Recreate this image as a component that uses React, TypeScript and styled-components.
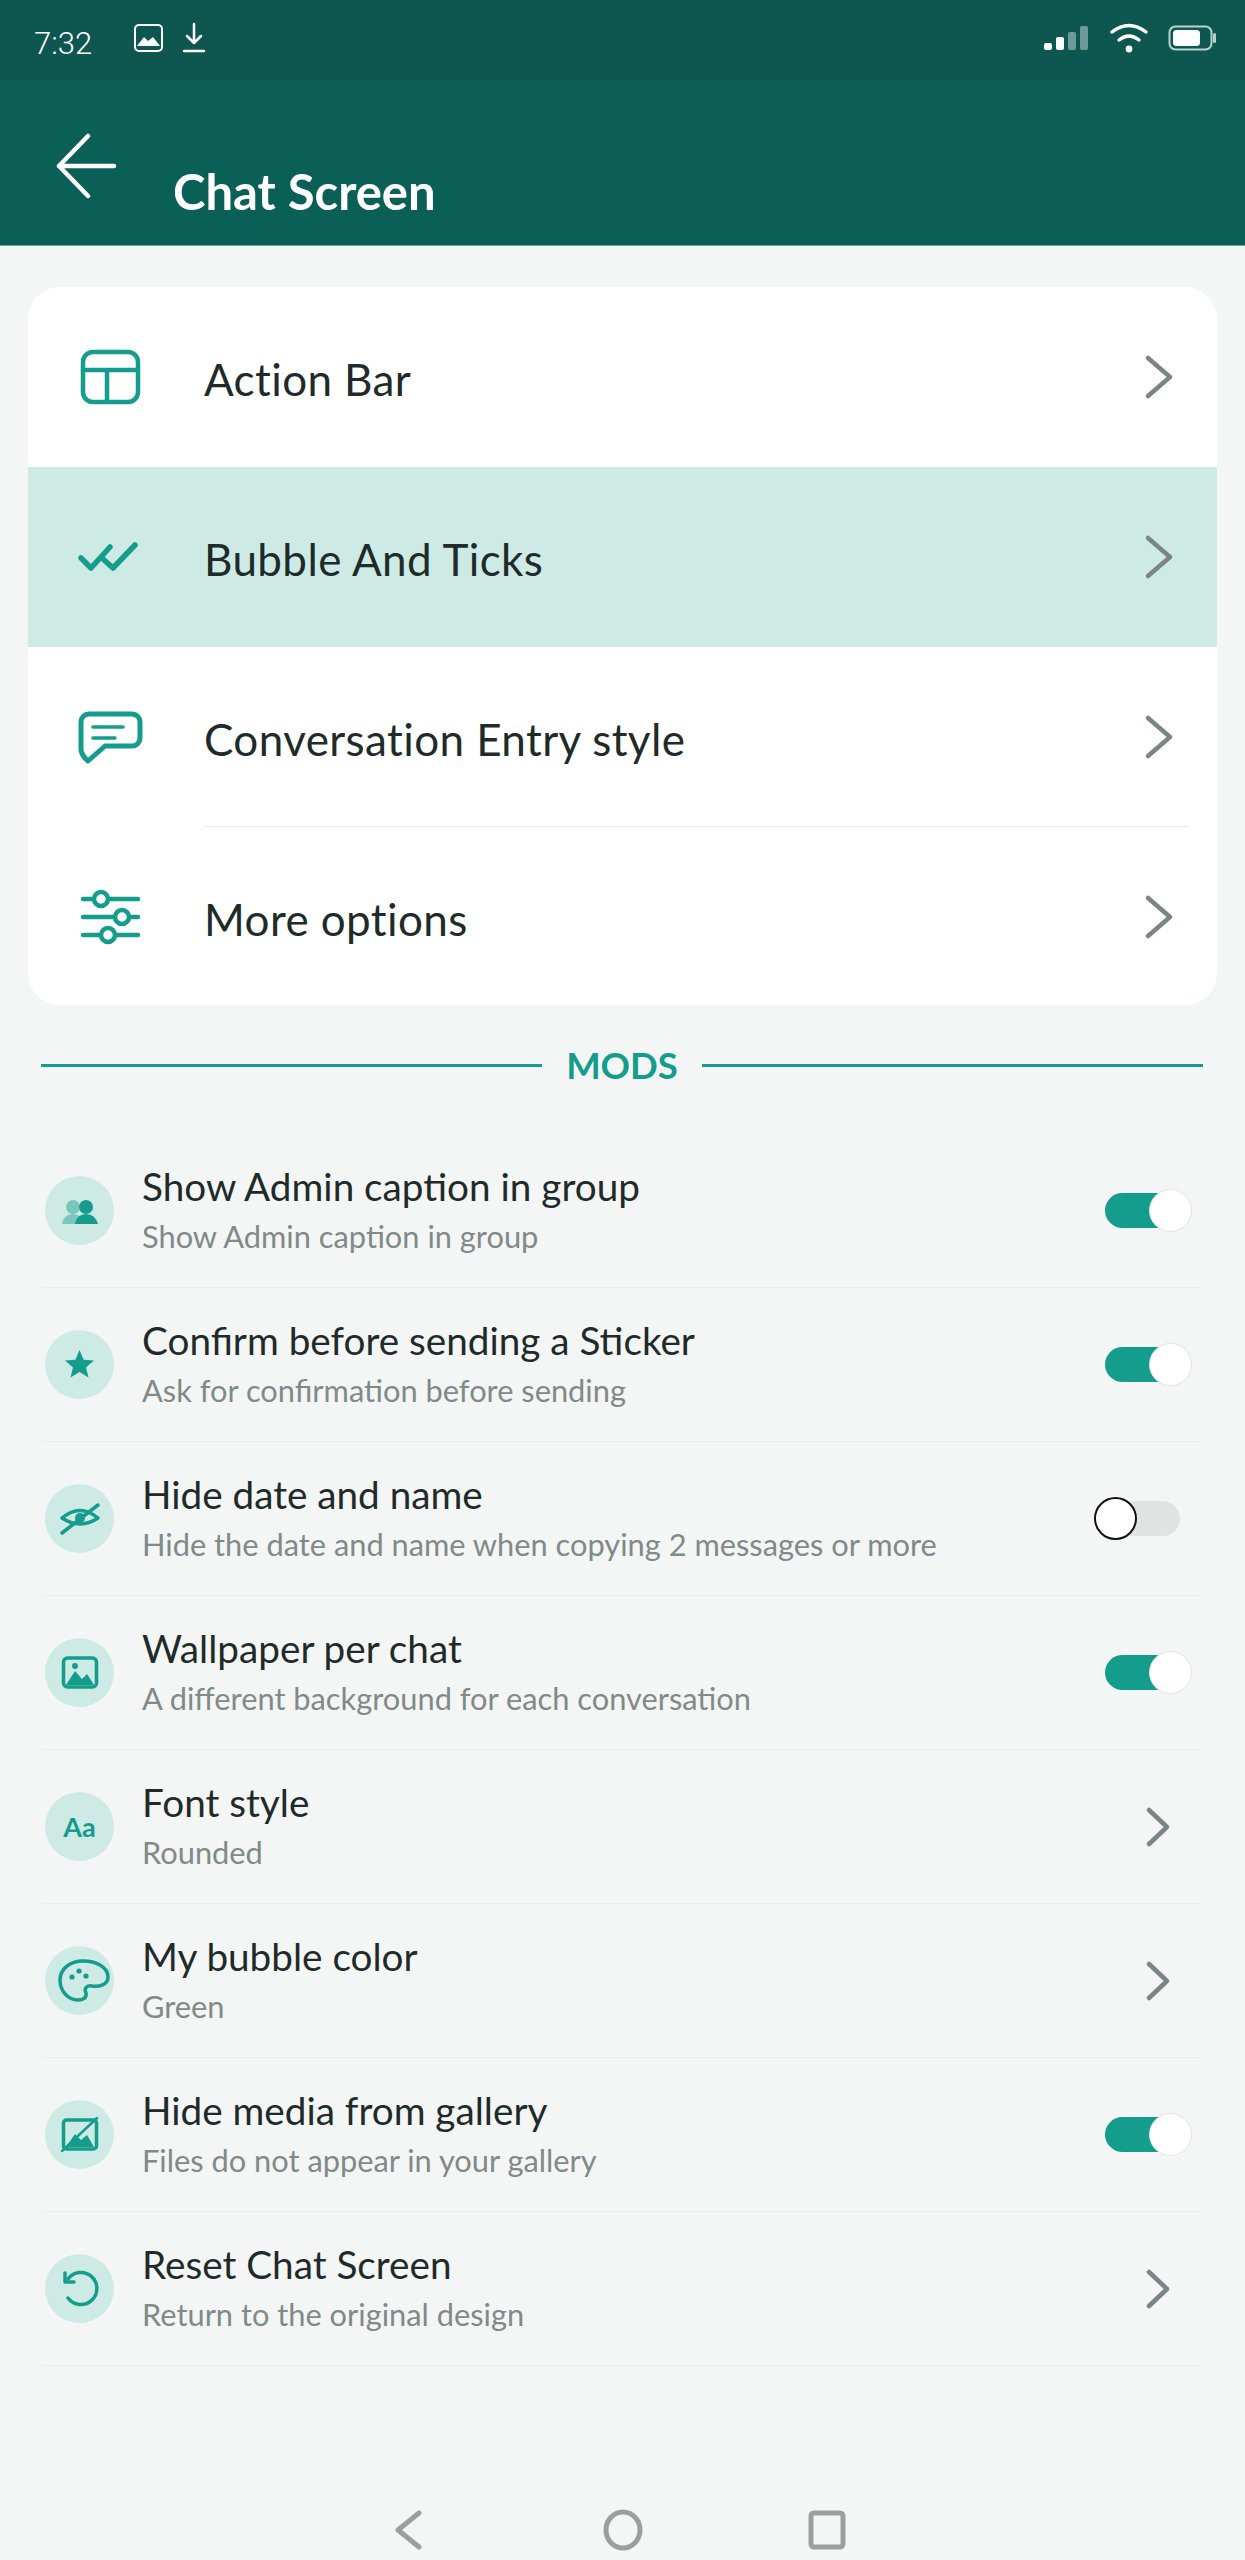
import React from "react";
import styled, { createGlobalStyle } from "styled-components";

const TEAL = "#149c8c";

interface ModItem {
  title: string;
  sub: string;
  icon: JSX.Element;
  toggle?: boolean;
}

const GlobalStyle = createGlobalStyle`
  html, body {
    margin: 0;
    padding: 0;
    background: #f4f6f5;
  }
  * {
    box-sizing: border-box;
  }
`;

const Page = styled.div`
  width: 1245px;
  height: 2560px;
  display: flex;
  flex-direction: column;
  background: #f4f6f5;
  font-family: Lato, "Liberation Sans", sans-serif;
  overflow: hidden;
`;

const StatusBar = styled.div`
  height: 80px;
  flex: none;
  display: flex;
  align-items: center;
  padding: 0 29px 0 34px;
  background: #0d5750;
  color: #fff;
`;

const Time = styled.span`
  font-family: Roboto, sans-serif;
  font-weight: 300;
  font-size: 31px;
  width: 99px;
  padding-top: 6px;
`;

const StatusLeft = styled.div`
  display: flex;
  align-items: center;
  gap: 18px;
  flex: 1;
  margin-bottom: 4px;
`;

const StatusRight = styled.div`
  display: flex;
  align-items: center;
  gap: 20px;
  margin-bottom: 4px;
`;

const AppBar = styled.div`
  height: 166px;
  flex: none;
  display: flex;
  background: #0a5f56;
  border-bottom: 1px solid #6fa59e;
  padding: 53px 0 0 54px;
`;

const Title = styled.h1`
  margin: 26px 0 0 56px;
  font-size: 49px;
  line-height: 64px;
  font-weight: 700;
  color: #fff;
`;

const Card = styled.div`
  margin: 41px 28px 0;
  height: 718px;
  background: #fff;
  border-radius: 32px;
  overflow: hidden;
  flex: none;
`;

const MenuRow = styled.div<{ $active?: boolean }>`
  height: 180px;
  display: flex;
  align-items: center;
  padding: 0 43px 0 47px;
  background: ${p => (p.$active ? "#cdeae5" : "transparent")};
`;

const MenuIcon = styled.svg`
  width: 70px;
  height: 70px;
  flex: none;
  margin-right: 59px;
  fill: none;
  stroke: ${TEAL};
  stroke-width: 4.5;
  stroke-linecap: round;
  stroke-linejoin: round;
`;

const MenuLabel = styled.span`
  flex: 1;
  font-size: 44px;
  letter-spacing: 0.4px;
  padding-top: 3px;
  color: #1f2b2a;
`;

const MenuDivider = styled.div`
  height: 1px;
  margin: -1px 27px 0 176px;
  background: #e6e9e8;
`;

const SectionHead = styled.div`
  margin: 40px 42px 0 41px;
  height: 40px;
  display: flex;
  align-items: center;
  gap: 24px;
  flex: none;
  font-size: 36.5px;
  font-weight: 700;
  color: ${TEAL};

  &::before,
  &::after {
    content: "";
    flex: 1;
    height: 3px;
    background: ${TEAL};
  }
`;

const ModList = styled.div`
  margin: 49px 42px 0 41px;
  flex: none;
`;

const ModRow = styled.div`
  height: 154px;
  display: flex;
  align-items: center;
  padding: 0 23px 0 4px;
  border-bottom: 1px solid #ebeeed;
`;

const IconCircle = styled.div`
  width: 69px;
  height: 69px;
  flex: none;
  border-radius: 50%;
  background: #cdeae5;
  margin-right: 28px;
  display: flex;
  align-items: center;
  justify-content: center;
  color: ${TEAL};
  font-size: 27px;
  font-weight: 700;
`;

const ModIcon = styled.svg`
  width: 69px;
  height: 69px;
  fill: none;
  stroke: ${TEAL};
  stroke-width: 3.5;
  stroke-linecap: round;
  stroke-linejoin: round;
`;

const ModText = styled.div`
  flex: 1;
  min-width: 0;
  padding-bottom: 3px;
`;

const ModTitle = styled.div`
  font-size: 38.7px;
  line-height: 50px;
  color: #1f2b2a;
`;

const ModSub = styled.div`
  font-size: 30.8px;
  line-height: 42px;
  margin-top: 5px;
  color: #808a88;
`;

const Track = styled.div<{ $on: boolean }>`
  position: relative;
  width: 75px;
  height: 35px;
  flex: none;
  border-radius: 18px;
  background: ${p => (p.$on ? TEAL : "#e1e3e3")};
`;

const Thumb = styled.div<{ $on: boolean }>`
  position: absolute;
  top: -4px;
  width: 43px;
  height: 43px;
  border-radius: 50%;
  background: #fff;
  border: ${p => (p.$on ? "1px solid #e2e4e4" : "2px solid #111")};
  left: ${p => (p.$on ? "44px" : "-11px")};
`;

const Chevron = styled.svg`
  flex: none;
  fill: none;
  stroke: #7b8583;
  stroke-width: 4.5;
  stroke-linecap: round;
  stroke-linejoin: round;
`;

const ListChevron = styled(Chevron)`
  margin-right: 9px;
`;

const NavBar = styled.div`
  margin-top: auto;
  padding: 0 6px 9px 0;
  display: flex;
  justify-content: center;
  align-items: center;
  gap: 165px;
`;

const NavBack = styled.svg`
  margin-right: 16px;
  fill: none;
  stroke: #9aa09e;
  stroke-width: 5;
  stroke-linecap: round;
  stroke-linejoin: round;
`;

const NavIcon = styled.svg`
  fill: none;
  stroke: #9aa09e;
  stroke-width: 5;
`;

const Toggle = ({ on }: { on: boolean }) => (
  <Track $on={on}>
    <Thumb $on={on} />
  </Track>
);

const menu = [
  {
    label: "Action Bar",
    icon: (
      <>
        <rect x="8" y="10" width="55" height="50" rx="10" />
        <path d="M8 28H63M32 28V60" />
      </>
    )
  },
  {
    label: "Bubble And Ticks",
    active: true,
    icon: <path d="M6 36L16 46L35 25M28 37L38 46L60 23" strokeWidth="5.5" />
  },
  {
    label: "Conversation Entry style",
    icon: (
      <>
        <path d="M14 12H57a8 8 0 0 1 8 8V36a8 8 0 0 1-8 8H30L13 59Q7 54 6 48V20a8 8 0 0 1 8-8Z" strokeWidth="5" />
        <path d="M18 25H48M18 36H40" strokeWidth="3.5" />
      </>
    )
  },
  {
    label: "More options",
    icon: (
      <>
        <path d="M8 17H63M8 35H63M8 53H63" strokeWidth="4.5" />
        <circle cx="26" cy="17" r="7" fill="#fff" strokeWidth="4.5" />
        <circle cx="47" cy="35" r="7" fill="#fff" strokeWidth="4.5" />
        <circle cx="33" cy="53" r="7" fill="#fff" strokeWidth="4.5" />
      </>
    )
  }
];

const mods: ModItem[] = [
  {
    title: "Show Admin caption in group",
    sub: "Show Admin caption in group",
    toggle: true,
    icon: (
      <ModIcon viewBox="0 0 69 69">
        <g fill={TEAL} stroke="none" opacity="0.45">
          <circle cx="28" cy="31" r="7" />
          <path d="M17 48Q19 38 28 38Q37 38 40 48Z" />
        </g>
        <g fill={TEAL} stroke="none">
          <circle cx="41" cy="31" r="7" />
          <path d="M30 48Q32 38 41 38Q50 38 53 48Z" />
        </g>
      </ModIcon>
    )
  },
  {
    title: "Confirm before sending a Sticker",
    sub: "Ask for confirmation before sending",
    toggle: true,
    icon: (
      <ModIcon viewBox="0 0 69 69">
        <path
          fill={TEAL}
          stroke="none"
          d="M34.5 20L38.6 29.8L49 30.6L41 37.4L43.5 47.6L34.5 42L25.5 47.6L28 37.4L20 30.6L30.4 29.8Z"
        />
      </ModIcon>
    )
  },
  {
    title: "Hide date and name",
    sub: "Hide the date and name when copying 2 messages or more",
    toggle: false,
    icon: (
      <ModIcon viewBox="0 0 69 69">
        <path d="M17 34Q35 19 53 34Q35 46 17 34Z" />
        <circle cx="35" cy="34" r="5" fill={TEAL} stroke="none" />
        <path d="M17 49L53 21" />
      </ModIcon>
    )
  },
  {
    title: "Wallpaper per chat",
    sub: "A different background for each conversation",
    toggle: true,
    icon: (
      <ModIcon viewBox="0 0 69 69">
        <rect x="18.5" y="20" width="33" height="29" rx="4" />
        <circle cx="30" cy="28" r="3" fill={TEAL} stroke="none" />
        <path d="M21 47L30 33L37 41L42 36L49 47Z" fill={TEAL} stroke="none" />
      </ModIcon>
    )
  },
  {
    title: "Font style",
    sub: "Rounded",
    icon: <span>Aa</span>
  },
  {
    title: "My bubble color",
    sub: "Green",
    icon: (
      <ModIcon viewBox="0 0 69 69">
        <path d="M38 15C51 15 63 21 63 31C63 39 54 41 47 40C41 39 39 43 41 47C42 52 38 54 33 54C23 54 15 45 15 34C15 23 25 15 38 15Z" />
        <circle cx="27" cy="31" r="2.6" fill={TEAL} stroke="none" />
        <circle cx="34" cy="25" r="2.6" fill={TEAL} stroke="none" />
        <circle cx="41" cy="30" r="2.6" fill={TEAL} stroke="none" />
      </ModIcon>
    )
  },
  {
    title: "Hide media from gallery",
    sub: "Files do not appear in your gallery",
    toggle: true,
    icon: (
      <ModIcon viewBox="0 0 69 69">
        <rect x="18.5" y="20" width="33" height="29" rx="3" />
        <path d="M21 47L30 34L36 40L42 35L49 47Z" fill={TEAL} stroke="none" />
        <path d="M17 51L52 18" strokeWidth="2.5" />
      </ModIcon>
    )
  },
  {
    title: "Reset Chat Screen",
    sub: "Return to the original design",
    icon: (
      <ModIcon viewBox="0 0 69 69">
        <path d="M23 25A16 16 0 1 1 23 44" />
        <path d="M20 19V28H29" />
      </ModIcon>
    )
  }
];

export default function App() {
  return (
    <Page>
      <GlobalStyle />
      <StatusBar>
        <Time>7:32</Time>
        <StatusLeft>
          <svg width="31" height="30" viewBox="0 0 31 30" fill="none">
            <rect x="2" y="2" width="27" height="26" rx="4" stroke="#fff" strokeWidth="2" />
            <path d="M4 23L11 14L15 18L20 14L27 23Z" fill="#fff" />
          </svg>
          <svg width="24" height="32" viewBox="0 0 24 32" fill="none" stroke="#fff" strokeWidth="2.5" strokeLinecap="round">
            <path d="M12 2V20M5 14L12 21L19 14" strokeLinejoin="round" />
            <path d="M2 29H22" />
          </svg>
        </StatusLeft>
        <StatusRight>
          <svg width="46" height="24" viewBox="0 0 46 24" fill="#fff">
            <rect x="0" y="17" width="8" height="7" rx="2" />
            <rect x="12" y="11" width="8" height="13" rx="2" />
            <rect x="24" y="6" width="8" height="18" rx="2" opacity="0.4" />
            <rect x="36" y="0" width="8" height="24" rx="2" opacity="0.4" />
          </svg>
          <svg width="38" height="30" viewBox="0 0 38 30" fill="none" stroke="#fff" strokeWidth="3.4" strokeLinecap="round">
            <path d="M2 9Q19 -4 36 9" />
            <path d="M9 17Q19 9 29 17" />
            <circle cx="19" cy="26" r="3.4" fill="#fff" stroke="none" />
          </svg>
          <svg width="48" height="26" viewBox="0 0 48 26" fill="none">
            <rect x="1.5" y="1.5" width="42" height="23" rx="6" stroke="#b9d2ce" strokeWidth="2" />
            <rect x="5" y="5" width="27" height="16" rx="3.5" fill="#fff" />
            <rect x="45" y="8" width="3" height="10" rx="1.5" fill="#b9d2ce" />
          </svg>
        </StatusRight>
      </StatusBar>

      <AppBar>
        <svg width="63" height="66" viewBox="0 0 63 66" fill="none" stroke="#fff" strokeWidth="4.5" strokeLinecap="round" strokeLinejoin="round">
          <path d="M34 3L5 33L34 63M5 33H60" />
        </svg>
        <Title>Chat Screen</Title>
      </AppBar>

      <Card>
        {menu.map((m, i) => (
          <React.Fragment key={m.label}>
            <MenuRow $active={m.active}>
              <MenuIcon viewBox="0 0 70 70">{m.icon}</MenuIcon>
              <MenuLabel>{m.label}</MenuLabel>
              <Chevron width="30" height="46" viewBox="0 0 30 46">
                <path d="M4 4L26 23L4 42" />
              </Chevron>
            </MenuRow>
            {i === 2 && <MenuDivider />}
          </React.Fragment>
        ))}
      </Card>

      <SectionHead>MODS</SectionHead>

      <ModList>
        {mods.map(m => (
          <ModRow key={m.title}>
            <IconCircle>{m.icon}</IconCircle>
            <ModText>
              <ModTitle>{m.title}</ModTitle>
              <ModSub>{m.sub}</ModSub>
            </ModText>
            {m.toggle === undefined ? (
              <ListChevron width="26" height="42" viewBox="0 0 26 42">
                <path d="M4 4L22 21L4 38" />
              </ListChevron>
            ) : (
              <Toggle on={m.toggle} />
            )}
          </ModRow>
        ))}
      </ModList>

      <NavBar>
        <NavBack width="28" height="42" viewBox="0 0 28 42">
          <path d="M25 4L4 21L25 38" />
        </NavBack>
        <NavIcon width="40" height="42" viewBox="0 0 40 42">
          <ellipse cx="20" cy="21" rx="17" ry="18" />
        </NavIcon>
        <NavIcon width="38" height="40" viewBox="0 0 38 40">
          <rect x="3" y="3" width="32" height="34" rx="3" />
        </NavIcon>
      </NavBar>
    </Page>
  );
}
